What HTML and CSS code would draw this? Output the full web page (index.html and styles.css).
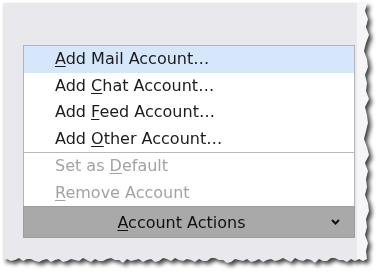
FILE: index.html
```html
<!DOCTYPE html>
<html>
<head>
<meta charset="utf-8">
<link rel="stylesheet" href="styles.css">
</head>
<body>
<div class="shadow">
  <div class="shot">
    <div class="main">
      <div class="menu">
        <div class="item active"><u>A</u>dd Mail Account…</div>
        <div class="item">Add <u>C</u>hat Account…</div>
        <div class="item">Add <u>F</u>eed Account…</div>
        <div class="item">Add <u>O</u>ther Account…</div>
        <div class="sep"></div>
        <div class="item disabled">Set as <u>D</u>efault</div>
        <div class="item disabled"><u>R</u>emove Account</div>
        <div class="button">
          <span class="label"><u>A</u>ccount Actions</span>
          <svg class="chev" width="9" height="6" viewBox="0 0 9 6"><polyline points="1,1 4.5,4.5 8,1" fill="none" stroke="#111" stroke-width="2"/></svg>
        </div>
      </div>
    </div>
    <div class="strip"></div>
  </div>
</div>
</body>
</html>
```
FILE: styles.css
```css
html, body {
  margin: 0;
  padding: 0;
  background: #ffffff;
}
body {
  width: 383px;
  height: 277px;
  overflow: hidden;
  font-family: "DejaVu Sans", sans-serif;
}
.shadow {
  margin: 3px 0 0 3px;
  width: 366px;
  height: 260px;
  filter: drop-shadow(3px 3px 2px rgba(0,0,0,0.75));
}
.shot {
  width: 366px;
  height: 260px;
  display: flex;
  box-shadow: inset 2px 2px 3px rgba(255,255,255,0.9);
  clip-path: polygon(0 0, 364px 0, 362px 8px, 365px 16px, 363px 24px, 366px 32px, 363px 40px, 361px 48px, 364px 56px, 365px 64px, 362px 72px, 364px 80px, 363px 88px, 366px 96px, 362px 104px, 364px 112px, 365px 120px, 363px 128px, 361px 136px, 364px 144px, 366px 152px, 362px 160px, 365px 168px, 363px 176px, 364px 184px, 362px 192px, 365px 200px, 366px 208px, 363px 216px, 364px 224px, 362px 232px, 365px 240px, 363px 248px, 364px 256px, 360px 258px, 356px 256px, 352px 258px, 348px 256px, 344px 259px, 340px 257px, 336px 257px, 332px 255px, 328px 255px, 324px 258px, 320px 258px, 316px 256px, 312px 260px, 308px 257px, 304px 256px, 300px 258px, 296px 257px, 292px 255px, 288px 259px, 284px 257px, 280px 255px, 276px 257px, 272px 258px, 268px 256px, 264px 257px, 260px 259px, 256px 256px, 252px 258px, 248px 259px, 244px 256px, 240px 258px, 236px 257px, 232px 256px, 228px 259px, 224px 260px, 220px 257px, 216px 257px, 212px 255px, 208px 255px, 204px 258px, 200px 258px, 196px 256px, 192px 259px, 188px 257px, 184px 256px, 180px 258px, 176px 257px, 172px 255px, 168px 258px, 164px 256px, 160px 255px, 156px 258px, 152px 259px, 148px 256px, 144px 257px, 140px 259px, 136px 256px, 132px 257px, 128px 258px, 124px 256px, 120px 260px, 116px 257px, 112px 257px, 108px 255px, 104px 256px, 100px 258px, 96px 258px, 92px 256px, 88px 259px, 84px 257px, 80px 255px, 76px 258px, 72px 257px, 68px 256px, 64px 258px, 60px 259px, 56px 256px, 52px 257px, 48px 259px, 44px 256px, 40px 257px, 36px 259px, 32px 258px, 28px 256px, 24px 256px, 20px 258px, 16px 255px, 12px 257px, 8px 258px, 4px 256px, 0 257px);
}
.main {
  width: 354px;
  background: #e9e9ed;
  padding: 42px 0 0 20px;
  box-sizing: border-box;
}
.strip {
  flex: 1;
  background: #f6f6f8;
}
.menu {
  width: 332px;
  background: #ffffff;
  border: 1px solid #b4b4b8;
  border-bottom: none;
  box-sizing: border-box;
}
.item {
  height: 26.5px;
  line-height: 26.5px;
  padding-left: 31px;
  font-size: 16px;
  color: #1b1b1b;
  white-space: nowrap;
}
.item u, .label u {
  text-underline-offset: 2px;
}
.item.active {
  background: #d6e7fb;
}
.item.disabled {
  color: #a3a3a3;
}
.sep {
  height: 1px;
  background: #b8b8bc;
}
.button {
  margin: 0 -1px;
  height: 32px;
  background: #a9a9a9;
  border: 1px solid #9c9c9c;
  box-sizing: border-box;
  display: flex;
  align-items: center;
  font-size: 16px;
  color: #111;
  padding-right: 14px;
}
.label {
  flex: 1;
  text-align: center;
  padding-left: 8px;
}
.chev {
  display: block;
}
```
